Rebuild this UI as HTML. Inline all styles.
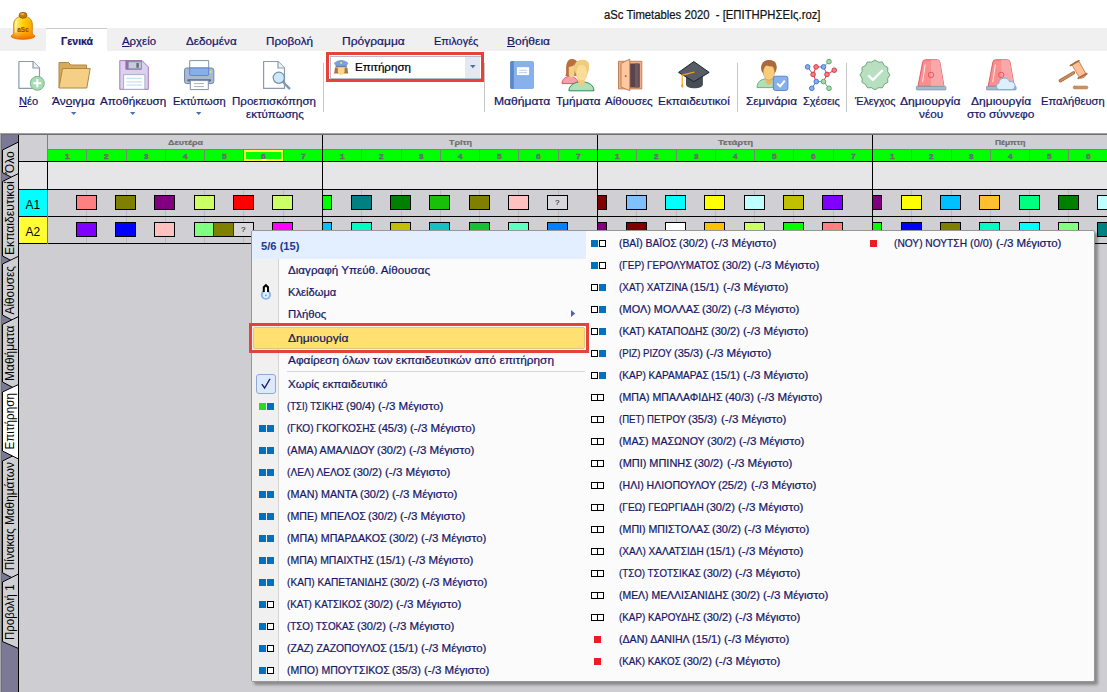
<!DOCTYPE html>
<html lang="el"><head><meta charset="utf-8"><title>aSc Timetables 2020 - [ΕΠΙΤΗΡΗΣΕΙς.roz]</title>
<style>
html,body{margin:0;padding:0;}
body{width:1107px;height:692px;overflow:hidden;position:relative;background:#fff;font-family:"Liberation Sans",sans-serif;font-size:12px;}
.a{position:absolute;}
.t{position:absolute;white-space:pre;line-height:1;transform-origin:0 0;-webkit-text-stroke:0.22px currentColor;}
.card{position:absolute;box-sizing:border-box;border:1px solid #000;width:21px;height:15px;}
.sq{position:absolute;width:7px;height:7px;box-sizing:border-box;}
.sqb{background:#0070c0;}
.sqg{background:#22dd22;}
.sqr{background:#ed1c24;}
.sqw{background:#fff;border:1px solid #000;}
.sep{position:absolute;width:1px;background:#c6c6c6;top:63px;height:49px;}
svg{position:absolute;overflow:visible;}
</style></head><body>

<span class="t" style="left:603.50px;top:8.84px;font-size:12px;color:#111;transform:scaleX(0.9415);">aSc Timetables 2020  - [ΕΠΙΤΗΡΗΣΕΙς.roz]</span>
<div class="a" style="left:0;top:28px;width:1107px;height:23px;background:#f0f0f0"></div>
<div class="a" style="left:46px;top:28px;width:61px;height:23px;background:#fff;border-top:1px solid #c9c9c9;box-sizing:border-box"></div>
<span class="t" style="left:61.00px;top:36.07px;font-size:11.5px;color:#151566;font-weight:bold;transform:scaleX(0.9127);">Γενικά</span>
<span class="t" style="left:122.00px;top:36.07px;font-size:11.5px;color:#151566;transform:scaleX(0.9904);"><u>Α</u>ρχείο</span>
<span class="t" style="left:186.30px;top:36.07px;font-size:11.5px;color:#151566;transform:scaleX(1.0188);">Δεδομένα</span>
<span class="t" style="left:266.00px;top:36.07px;font-size:11.5px;color:#151566;transform:scaleX(1.0176);">Προβολή</span>
<span class="t" style="left:342.40px;top:36.07px;font-size:11.5px;color:#151566;transform:scaleX(1.0450);">Πρόγραμμα</span>
<span class="t" style="left:434.30px;top:36.07px;font-size:11.5px;color:#151566;transform:scaleX(0.9514);">Επιλογές</span>
<span class="t" style="left:507.10px;top:36.07px;font-size:11.5px;color:#151566;transform:scaleX(1.0436);"><u>Β</u>οήθεια</span>
<span class="t" style="left:19.20px;top:96.07px;font-size:11.5px;color:#151566;transform:scaleX(0.9676);"><u>Ν</u>έο</span>
<span class="t" style="left:52.10px;top:96.07px;font-size:11.5px;color:#151566;transform:scaleX(1.0384);">Άν<u>ο</u>ιγμα</span>
<span class="t" style="left:100.30px;top:96.07px;font-size:11.5px;color:#151566;transform:scaleX(1.0154);">Αποθήκευση</span>
<span class="t" style="left:173.00px;top:96.07px;font-size:11.5px;color:#151566;transform:scaleX(0.9670);">Εκτύπωση</span>
<span class="t" style="left:231.50px;top:96.07px;font-size:11.5px;color:#151566;transform:scaleX(1.0045);">Προεπισκόπηση</span>
<span class="t" style="left:245.60px;top:109.07px;font-size:11.5px;color:#151566;transform:scaleX(1.0052);">εκτύπωσης</span>
<span class="t" style="left:493.70px;top:96.07px;font-size:11.5px;color:#151566;transform:scaleX(1.0539);">Μαθήματα</span>
<span class="t" style="left:555.50px;top:96.07px;font-size:11.5px;color:#151566;transform:scaleX(1.0226);">Τμήματα</span>
<span class="t" style="left:605.30px;top:96.07px;font-size:11.5px;color:#151566;transform:scaleX(1.0132);">Αίθουσες</span>
<span class="t" style="left:658.40px;top:96.07px;font-size:11.5px;color:#151566;transform:scaleX(1.0275);">Εκπαιδευτικοί</span>
<span class="t" style="left:746.10px;top:96.07px;font-size:11.5px;color:#151566;transform:scaleX(1.0290);">Σεμινάρια</span>
<span class="t" style="left:802.50px;top:96.07px;font-size:11.5px;color:#151566;transform:scaleX(0.9535);">Σχέσεις</span>
<span class="t" style="left:854.80px;top:96.07px;font-size:11.5px;color:#151566;transform:scaleX(0.9351);">Έλεγχος</span>
<span class="t" style="left:900.30px;top:96.07px;font-size:11.5px;color:#151566;transform:scaleX(1.0530);">Δημιουργία</span>
<span class="t" style="left:918.70px;top:109.07px;font-size:11.5px;color:#151566;transform:scaleX(1.0271);">νέου</span>
<span class="t" style="left:970.50px;top:96.07px;font-size:11.5px;color:#151566;transform:scaleX(1.0461);">Δημιουργία</span>
<span class="t" style="left:966.80px;top:109.07px;font-size:11.5px;color:#151566;transform:scaleX(1.0395);">στο σύννεφο</span>
<span class="t" style="left:1040.60px;top:96.07px;font-size:11.5px;color:#151566;transform:scaleX(0.9703);">Επαλήθευση</span>
<svg style="left:70.8px;top:112px" width="6" height="4"><path d="M0 0h5.4l-2.7 3.1z" fill="#4a6fb0"/></svg>
<svg style="left:130.3px;top:112px" width="6" height="4"><path d="M0 0h5.4l-2.7 3.1z" fill="#4a6fb0"/></svg>
<svg style="left:196.1px;top:112px" width="6" height="4"><path d="M0 0h5.4l-2.7 3.1z" fill="#4a6fb0"/></svg>
<div class="sep" style="left:323px"></div>
<div class="sep" style="left:484px"></div>
<div class="sep" style="left:737px"></div>
<div class="sep" style="left:846px"></div>
<div class="a" style="left:329.5px;top:55.5px;width:150px;height:21px;border:1px solid #b3bccb;background:#fff"></div>
<div class="a" style="left:465px;top:56.5px;width:15px;height:21px;background:#e3e8f3"></div>
<svg style="left:469.8px;top:65px" width="7" height="4"><path d="M0 0h5.6l-2.8 3.2z" fill="#4a6fb0"/></svg>
<span class="t" style="left:355.00px;top:61.67px;font-size:11.5px;color:#000;transform:scaleX(1.0084);">Επιτήρηση</span>
<div class="a" style="left:326px;top:52px;width:158px;height:30px;border:3px solid #e8403a;box-sizing:border-box"></div>
<svg style="left:0;top:0" width="1107" height="133" viewBox="0 0 1107 133">
<defs>
<linearGradient id="bellg" x1="0" y1="0" x2="1" y2="0"><stop offset="0" stop-color="#ffb000"/><stop offset="0.22" stop-color="#fff070"/><stop offset="0.5" stop-color="#ffd000"/><stop offset="1" stop-color="#f59a00"/></linearGradient>
<linearGradient id="bellv" x1="0" y1="0" x2="0" y2="1"><stop offset="0" stop-color="#ffff80" stop-opacity="0.3"/><stop offset="0.4" stop-color="#ff9000" stop-opacity="0"/><stop offset="0.8" stop-color="#ff7800" stop-opacity="0.6"/><stop offset="1" stop-color="#e85800" stop-opacity="0.85"/></linearGradient>
</defs>
<!-- bell logo -->
<g>
<path d="M11 36C12.5 35.2 13.6 34 13.8 32C13.6 28 13.2 23 14.5 20.5C16 17.5 19.5 16.3 23 16.3C26.5 16.3 30 17.5 31.5 20.5C32.8 23 32.4 28 32.2 32C32.4 34 33.5 35.2 35 36C35 37.8 29.5 39.3 23 39.3C16.5 39.3 11 37.8 11 36Z" fill="url(#bellg)" stroke="#c87800" stroke-width="0.8"/>
<path d="M11 36C12.5 35.2 13.6 34 13.8 32C13.6 28 13.2 23 14.5 20.5C16 17.5 19.5 16.3 23 16.3C26.5 16.3 30 17.5 31.5 20.5C32.8 23 32.4 28 32.2 32C32.4 34 33.5 35.2 35 36C35 37.8 29.5 39.3 23 39.3C16.5 39.3 11 37.8 11 36Z" fill="url(#bellv)"/>
<path d="M16.2 21.5C15.4 24 15.6 29 15.8 32" fill="none" stroke="#fffbd0" stroke-width="1.6" stroke-linecap="round" opacity="0.85"/>
<ellipse cx="23" cy="15.3" rx="4" ry="3" fill="#c07810" stroke="#8a5000" stroke-width="0.7"/>
<ellipse cx="22.3" cy="14.2" rx="2.2" ry="1.1" fill="#e8a840"/>
<text x="23" y="31.6" font-family="Liberation Sans, sans-serif" font-size="6.5" font-weight="bold" fill="#a04000" text-anchor="middle">aSc</text>
</g>
<!-- New -->
<g fill="#fff" stroke="#8a9bb0" stroke-width="1.2" stroke-linejoin="round">
<path d="M18.9 61.5H33l6.5 6.5V88.3H18.9Z"/>
<path d="M33 61.5V68h6.5" fill="#eef2f6"/>
</g>
<circle cx="37.3" cy="83.3" r="7" fill="#aadab4" stroke="#78b888" stroke-width="1"/>
<path d="M33.3 83.3h8M37.3 79.3v8" stroke="#fff" stroke-width="2"/>
<!-- Folder -->
<g stroke="#b08840" stroke-width="1" stroke-linejoin="round">
<path d="M59 88V62.5h9.5l2.5 2.5H86.5v3.5" fill="#d9a95c"/>
<path d="M59 88L62.5 68.5H90.2L86.8 88Z" fill="#f5cf85"/>
</g>
<!-- Floppy -->
<g stroke-linejoin="round">
<path d="M119.8 60.6H142l6.3 6.3V89.3H119.8Z" fill="#dcd0f0" stroke="#a878b8" stroke-width="1"/>
<path d="M125.4 60.6h16.4v8.2a1 1 0 0 1-1 1H126.4a1 1 0 0 1-1-1Z" fill="#8f6fa6"/>
<rect x="128.3" y="61.8" width="13" height="7" rx="0.8" fill="#c8ccd8" stroke="#8890a8" stroke-width="0.8"/>
<rect x="136.4" y="63" width="2.4" height="4.8" fill="#606878"/>
<rect x="123.6" y="74.6" width="21.3" height="14.7" fill="#fff" stroke="#a0a8c0" stroke-width="0.9"/>
<path d="M126.3 78.4h15.6M126.3 81.8h15.6M126.3 85.2h15.6" stroke="#c4e2f8" stroke-width="1.2"/>
</g>
<!-- Printer -->
<g stroke-linejoin="round">
<rect x="189.7" y="60.6" width="19" height="9" fill="#fff" stroke="#8090a8" stroke-width="1"/>
<rect x="184.5" y="68" width="29.3" height="15.6" rx="2.2" fill="#a9b9d1" stroke="#7088a8" stroke-width="1"/>
<path d="M189.7 68h19v6a1.5 1.5 0 0 1-1.5 1.5h-16a1.5 1.5 0 0 1-1.5-1.5Z" fill="#88b0e8" stroke="#5585cf" stroke-width="0.9"/>
<rect x="209.6" y="70.9" width="2" height="2" fill="#f8d860"/>
<path d="M188.3 80.3h21.8" stroke="#5a6a80" stroke-width="2.2" stroke-linecap="round"/>
<rect x="190.3" y="80.6" width="18" height="9" fill="#fff" stroke="#8090a8" stroke-width="1"/>
<path d="M194 83.6h10M194 86.6h10" stroke="#a8b0bc" stroke-width="1"/>
</g>
<!-- Preview -->
<g stroke-linejoin="round">
<path d="M263.6 61.5H278l6.5 6.5V88.4H263.6Z" fill="#fff" stroke="#8a9bb0" stroke-width="1.2"/>
<path d="M278 61.5V68h6.5" fill="#eef2f6" stroke="#8a9bb0" stroke-width="1.2"/>
<path d="M283 82l6.3 6.3" stroke="#8098b0" stroke-width="2.4" stroke-linecap="round"/>
<circle cx="278.8" cy="77.8" r="5.6" fill="#d0e8fa" stroke="#7090a8" stroke-width="1.2"/>
</g>
<!-- police (combo icon) -->
<g>
<path d="M335 67.5c-0.3 2.5-0.5 4.5-1 6h5.500000000000001V67.5ZM347.4 67.5c0.3 2.5 0.5 4.5 1 6H343V67.5Z" fill="#b07048"/>
<path d="M337.8 66.5h6.8v4.700000000000001c0 2.2-1.8 3.8-3.4 3.8s-3.4-1.6-3.4-3.8Z" fill="#f8d890"/>
<path d="M334 63.2c2-2.4 5-3.2 7.200000000000001-3.2s5.2 0.8 7.2 3.2l-1.6 2.3H335.6Z" fill="#78a0e0"/>
<rect x="335.6" y="65.3" width="11.2" height="1.9" fill="#6880a8"/>
<rect x="340.3" y="62" width="1.8" height="1.8" fill="#f8e060"/>
</g>
<!-- Book -->
<g>
<rect x="510.2" y="61" width="23.8" height="28" rx="1.8" fill="#88b0ec"/>
<path d="M512 61h1.8v28H512a1.8 1.8 0 0 1-1.8-1.8V62.8A1.8 1.8 0 0 1 512 61Z" fill="#5888c8"/>
<rect x="516.9" y="67.2" width="12.2" height="7.9" fill="#fff"/>
<path d="M519 70.3h8M519 72.6h8" stroke="#b8c8e0" stroke-width="0.9"/>
</g>
<!-- People -->
<g>
<path d="M562 83.6c0-4.3 3.5-7.2 8-7.2s8 2.9 8 7.2Z" fill="#f8a0a8" stroke="#e04858" stroke-width="0.9"/>
<path d="M565.2 75.9c1.600000000000001-2 0.6-6 1-10c0.6-4.500000000000001 2.8-7 5.800000000000001-7s6.500000000000001 2.5 6.500000000000001 7v10Z" fill="#b87040"/>
<path d="M568.8 67c2 0 4.500000000000001-1 5.700000000000001-2.8v10c0 2-1.5 3.5-3 3.5s-2.7-1.5-2.7-3.5Z" fill="#f4d088"/>
<path d="M568.9 90.8c0-5.500000000000001 5.500000000000001-9 12.6-9s12.5 3.5 12.5 9Z" fill="#b0e0b8" stroke="#208040" stroke-width="0.9"/>
<path d="M578.3 78h6.4v5c0 1.6-1.600000000000001 2.7-3.2 2.7s-3.2-1.1-3.2-2.7Z" fill="#f4cc80"/>
<ellipse cx="581.5" cy="68.5" rx="7.6" ry="7.6" fill="#f0cc80"/>
<ellipse cx="581.6" cy="72.6" rx="5.7" ry="8.2" fill="#fcdc98" stroke="#e8c070" stroke-width="0.5"/>
<path d="M575.2 70c0.5-3.5 1.5-5.500000000000001 3-6.500000000000001c2.5 1.5 6.5 2 9.5 1c0.3 1.5 0.5 3.5 0.5 5.500000000000001c1-2 1.5-6-0.5-8.5c-3-2.5-9-2-11.5 0.5c-1.5 2-2 5-1 8Z" fill="#f0cc80"/>
</g>
<!-- Door -->
<g stroke-linejoin="round">
<rect x="618.5" y="61.3" width="23.3" height="27.6" fill="#f0b080" stroke="#b87850" stroke-width="0.9"/>
<rect x="629.9" y="63.5" width="9.9" height="24" fill="#58444c"/>
<rect x="635" y="63.5" width="3.5" height="24" fill="#70585f"/>
<path d="M621 63.3L629.8 59.2V90.7L621 87Z" fill="#ffc8a0" stroke="#b87850" stroke-width="0.9"/>
<rect x="624.9" y="75.2" width="1.6" height="1.8" fill="#a06840"/>
</g>
<!-- Grad cap -->
<g stroke-linejoin="round">
<path d="M686 75v9.5c0 2.2 3.8 3.8 8.4 3.8s8.5-1.6 8.5-3.8V75Z" fill="#484c54"/>
<path d="M678.6 72.4L693.8 61.6L709.2 72.4L693.8 81.7Z" fill="#585c64" stroke="#18222e" stroke-width="1"/>
<path d="M694.5 72L682.2 75.2V85" fill="none" stroke="#f8a820" stroke-width="1.2"/>
<path d="M682.2 83.5l1.4 2.2l-1.4 2.6l-1.4-2.6Z" fill="#f8a820"/>
</g>
<!-- Seminar -->
<g>
<path d="M757 87.6c0-5.5 4-8.8 9.5-8.8h4c5.500000000000001 0 9.5 3.3 9.5 8.8Z" fill="#b0e0b8" stroke="#68a878" stroke-width="0.9"/>
<path d="M765.7 77h6.4v5c0 1.600000000000001-1.6 2.7-3.2 2.7s-3.2-1.1-3.2-2.7Z" fill="#e8b868"/>
<ellipse cx="768.8" cy="68" rx="7.8" ry="8" fill="#a86840"/>
<ellipse cx="768.9" cy="72.3" rx="5.6" ry="7.8" fill="#f8cc78" stroke="#c89850" stroke-width="0.5"/>
<path d="M762.7 70.5c0.5-3 1.3-4.500000000000001 2.8-5.500000000000001c2.500000000000001 1.5 6.500000000000001 2 9.5 0.8c0.3 1.5 0.5 3 0.5 4.7c1.2-2 1.5-6.000000000000001-0.5-8.5c-3-2.5-9.3-2-11.8 0.5c-1.5 2-1.7 5-0.5 8Z" fill="#a86840"/>
<rect x="773.3" y="76.2" width="14.6" height="14.3" rx="2.2" fill="#88b0ec" stroke="#5080c8" stroke-width="0.9"/>
<path d="M777.2 83.6l2.9 2.7l4.7-5.7" fill="none" stroke="#fff" stroke-width="2"/>
</g>
<!-- Molecule -->
<g stroke-width="1">
<path d="M807.6 66.9L813.1 74.4" stroke="#4878d0"/><path d="M816.1 66.9L813.1 74.4M813.1 74.4L816.3 81.6" stroke="#d83848"/>
<path d="M816.1 66.9H823.5M823.5 66.9L827 74.4M816.3 81.6L811.8 88.3" stroke="#4878d0"/>
<path d="M823.5 66.9L829 61.6M816.3 81.6H823.5M823.5 81.6L829 88.3" stroke="#58a870"/>
<path d="M827 74.4L834.2 70.2M827 74.4L823.5 81.6" stroke="#d83848"/>
<g fill="#88b0ec" stroke="#4878d0"><circle cx="807.6" cy="66.9" r="2.3"/><circle cx="823.5" cy="66.9" r="2.3"/><circle cx="816.3" cy="81.6" r="2.3"/><circle cx="811.8" cy="88.3" r="2.3"/></g>
<g fill="#f08088" stroke="#d83848"><circle cx="816.1" cy="66.9" r="2.3"/><circle cx="834.2" cy="70.2" r="2.3"/><circle cx="813.1" cy="74.4" r="2.3"/><circle cx="827" cy="74.4" r="2.3"/></g>
<g fill="#a8d8b0" stroke="#58a870"><circle cx="829" cy="61.6" r="2.3"/><circle cx="823.5" cy="81.6" r="2.3"/><circle cx="829" cy="88.3" r="2.3"/></g>
</g>
<!-- Check seal -->
<path d="M874.90 60.00Q878.03 63.21 882.35 62.00Q883.46 66.34 887.80 67.45Q886.59 71.77 889.80 74.90Q886.59 78.03 887.80 82.35Q883.46 83.46 882.35 87.80Q878.03 86.59 874.90 89.80Q871.77 86.59 867.45 87.80Q866.34 83.46 862.00 82.35Q863.21 78.03 860.00 74.90Q863.21 71.77 862.00 67.45Q866.34 66.34 867.45 62.00Q871.77 63.21 874.90 60.00Z" fill="#b8e0c0" stroke="#68a878" stroke-width="1" stroke-linejoin="round"/>
<path d="M868.3 75.4l4.600000000000001 4.500000000000001l9.9-9.9" fill="none" stroke="#fff" stroke-width="2.3"/>
<!-- Siren 1 -->
<g>
<path d="M918 86.3L922.6 62.3a2.8 2.8 0 0 1 2.8-2.500000000000001H937.1a2.8 2.8 0 0 1 2.8 2.5L944 86.3Z" fill="#f89090" stroke="#e05060" stroke-width="0.9"/>
<path d="M931 59.9h6.1a2.8 2.8 0 0 1 2.8 2.5L943.9 86.2H931Z" fill="#f8a8a8"/>
<path d="M925.2 64.5L922.6 82" stroke="#fff" stroke-width="0.9" opacity="0.9"/>
<circle cx="931" cy="74.9" r="2.7" fill="none" stroke="#e05060" stroke-width="0.9"/>
<rect x="916.3" y="86.4" width="29.6" height="3.5" rx="0.6" fill="#a8b8c8" stroke="#8098b0" stroke-width="0.8"/>
</g>
<g transform="translate(70.2,0)">
<path d="M918 86.3L922.6 62.3a2.8 2.8 0 0 1 2.8-2.500000000000001H937.1a2.8 2.8 0 0 1 2.8 2.5L944 86.3Z" fill="#f89090" stroke="#e05060" stroke-width="0.9"/>
<path d="M931 59.9h6.1a2.8 2.8 0 0 1 2.8 2.5L943.9 86.2H931Z" fill="#f8a8a8"/>
<path d="M925.2 64.5L922.6 82" stroke="#fff" stroke-width="0.9" opacity="0.9"/>
<circle cx="931" cy="74.9" r="2.7" fill="none" stroke="#e05060" stroke-width="0.9"/>
<rect x="916.3" y="86.4" width="29.6" height="3.5" rx="0.6" fill="#a8b8c8" stroke="#8098b0" stroke-width="0.8"/>
</g>
<!-- cloud -->
<path d="M999.6 89.6a3.2 3.2 0 0 1-0.8-6.3a5.6 5.6 0 0 1 10.8-1.6a4 4 0 0 1 2.6 7.9Z" fill="#ddeefc" stroke="#80a8e0" stroke-width="0.9" stroke-linejoin="round"/>
<!-- Gavel -->
<g stroke-linejoin="round" stroke-linecap="round">
<path d="M1060.3 80.7L1073.5 72.9" stroke="#a86c40" stroke-width="3.4"/>
<path d="M1060.3 80.7L1073.5 72.9" stroke="#c89060" stroke-width="1.8"/>
<path d="M1072.3 64.6C1074.5 62 1077.5 61 1079.2 61.8L1086.2 74.4C1085.8 76.5 1083 78.5 1080.2 78.2Z" fill="#ffc098" stroke="#b87850" stroke-width="0.9"/>
<path d="M1070.5 65.5L1078.8 60.7M1078.3 78.3L1086.7 73.6" stroke="#a86c40" stroke-width="1.8"/>
<rect x="1073.3" y="86.2" width="14.5" height="2.6" rx="1.2" fill="#c89060" stroke="#b07848" stroke-width="0.8"/>
</g>
</svg>

<div class="a" style="left:0;top:133px;width:1107px;height:559px;background:#cdcdd2"></div>
<div class="a" style="left:0;top:133px;width:1107px;height:1px;background:#a0a0a0"></div>
<div class="a" style="left:0;top:134px;width:1107px;height:1px;background:#6e6e6e"></div>
<div class="a" style="left:0;top:134px;width:1px;height:558px;background:#a8a8a8"></div>
<div class="a" style="left:1px;top:134px;width:1px;height:558px;background:#6e6e6e"></div>
<div class="a" style="left:2px;top:135px;width:16px;height:557px;background:#7a7a96"></div>
<div class="a" style="left:18px;top:135px;width:1px;height:557px;background:#000"></div>
<svg style="left:0;top:0" width="20" height="692" viewBox="0 0 20 692"><polygon points="18.5,142 2.5,150 2.5,172.6 18.5,181" fill="#d0d0d4"/><polyline points="18.5,142 2.5,150 2.5,172.6 18.5,181" fill="none" stroke="#000" stroke-width="1"/><polygon points="18.5,173.5 2.5,181.5 2.5,256 18.5,264.5" fill="#d0d0d4"/><polyline points="18.5,173.5 2.5,181.5 2.5,256 18.5,264.5" fill="none" stroke="#000" stroke-width="1"/><polygon points="18.5,256.3 2.5,264 2.5,315 18.5,323.5" fill="#d0d0d4"/><polyline points="18.5,256.3 2.5,264 2.5,315 18.5,323.5" fill="none" stroke="#000" stroke-width="1"/><polygon points="18.5,316.5 2.5,324.5 2.5,382 18.5,390.5" fill="#d0d0d4"/><polyline points="18.5,316.5 2.5,324.5 2.5,382 18.5,390.5" fill="none" stroke="#000" stroke-width="1"/><polygon points="18.5,453 2.5,461 2.5,572.8 18.5,581" fill="#d0d0d4"/><polyline points="18.5,453 2.5,461 2.5,572.8 18.5,581" fill="none" stroke="#000" stroke-width="1"/><polygon points="18.5,574 2.5,582 2.5,641.6 18.5,648.5" fill="#d0d0d4"/><polyline points="18.5,574 2.5,582 2.5,641.6 18.5,648.5" fill="none" stroke="#000" stroke-width="1"/><polygon points="18.5,384.5 2.5,392 2.5,451 18.5,459" fill="#ffffff"/><polyline points="18.5,384.5 2.5,392 2.5,451 18.5,459" fill="none" stroke="#000" stroke-width="1"/></svg>
<div class="a" style="left:18px;top:135px;width:1px;height:557px;background:#000"></div>
<span class="t" style="left:0;top:0;font-size:12px;color:#000;-webkit-text-stroke:0;transform:translate(3.64px,173.20px) rotate(-90deg) scaleX(1.0093);">Όλο</span>
<span class="t" style="left:0;top:0;font-size:12px;color:#000;-webkit-text-stroke:0;transform:translate(3.64px,255.00px) rotate(-90deg) scaleX(1.0107);">Εκπαιδευτικοί</span>
<span class="t" style="left:0;top:0;font-size:12px;color:#000;-webkit-text-stroke:0;transform:translate(3.64px,314.50px) rotate(-90deg) scaleX(0.9873);">Αίθουσες</span>
<span class="t" style="left:0;top:0;font-size:12px;color:#000;-webkit-text-stroke:0;transform:translate(3.64px,381.00px) rotate(-90deg) scaleX(0.9975);">Μαθήματα</span>
<span class="t" style="left:0;top:0;font-size:12px;color:#000;-webkit-text-stroke:0;transform:translate(3.64px,570.20px) rotate(-90deg) scaleX(0.9796);">Πίνακας Μαθημάτων</span>
<span class="t" style="left:0;top:0;font-size:12px;color:#000;-webkit-text-stroke:0;transform:translate(3.64px,640.00px) rotate(-90deg) scaleX(0.9536);">Προβολή 1</span>
<span class="t" style="left:0;top:0;font-size:12px;color:#000;-webkit-text-stroke:0;transform:translate(3.64px,449.50px) rotate(-90deg) scaleX(0.9749);">Επιτήρηση</span>
<div class="a" style="left:19px;top:135px;width:1088px;height:26px;background:#d0d0d4"></div>
<div class="a" style="left:47px;top:150px;width:1060px;height:11px;background:#00ff00"></div>
<div class="a" style="left:47px;top:149px;width:1060px;height:1px;background:#808080"></div>
<div class="a" style="left:19px;top:162px;width:1088px;height:27px;background:#e6e6e8"></div>
<div class="a" style="left:47px;top:190px;width:1060px;height:53px;background:#d0d0d4"></div>
<div class="a" style="left:19px;top:190px;width:28px;height:26px;background:#00ffff"></div>
<div class="a" style="left:19px;top:217px;width:28px;height:26px;background:#ffff33"></div>
<span class="t" style="left:25.60px;top:198.54px;font-size:12px;color:#000;-webkit-text-stroke:0;">A1</span>
<span class="t" style="left:25.60px;top:225.54px;font-size:12px;color:#000;-webkit-text-stroke:0;">A2</span>
<div class="a" style="left:86.0px;top:150px;width:1px;height:11px;background:#808080"></div>
<div class="a" style="left:86.0px;top:190px;width:1px;height:53px;background:#bcbcbf"></div>
<div class="a" style="left:126.0px;top:150px;width:1px;height:11px;background:#808080"></div>
<div class="a" style="left:126.0px;top:190px;width:1px;height:53px;background:#bcbcbf"></div>
<div class="a" style="left:165.0px;top:150px;width:1px;height:11px;background:#808080"></div>
<div class="a" style="left:165.0px;top:190px;width:1px;height:53px;background:#bcbcbf"></div>
<div class="a" style="left:204.0px;top:150px;width:1px;height:11px;background:#808080"></div>
<div class="a" style="left:204.0px;top:190px;width:1px;height:53px;background:#bcbcbf"></div>
<div class="a" style="left:243.0px;top:150px;width:1px;height:11px;background:#808080"></div>
<div class="a" style="left:243.0px;top:190px;width:1px;height:53px;background:#bcbcbf"></div>
<div class="a" style="left:283.0px;top:150px;width:1px;height:11px;background:#808080"></div>
<div class="a" style="left:283.0px;top:190px;width:1px;height:53px;background:#bcbcbf"></div>
<span class="t" style="left:65.04px;top:152.65px;font-size:7.5px;color:#6a6a74;font-weight:bold;transform:scaleX(1.1026);-webkit-text-stroke:0.45px #6a6a74;">1</span>
<span class="t" style="left:104.33px;top:152.65px;font-size:7.5px;color:#6a6a74;font-weight:bold;transform:scaleX(1.1026);-webkit-text-stroke:0.45px #6a6a74;">2</span>
<span class="t" style="left:143.61px;top:152.65px;font-size:7.5px;color:#6a6a74;font-weight:bold;transform:scaleX(1.1026);-webkit-text-stroke:0.45px #6a6a74;">3</span>
<span class="t" style="left:182.90px;top:152.65px;font-size:7.5px;color:#6a6a74;font-weight:bold;transform:scaleX(1.1026);-webkit-text-stroke:0.45px #6a6a74;">4</span>
<span class="t" style="left:222.19px;top:152.65px;font-size:7.5px;color:#6a6a74;font-weight:bold;transform:scaleX(1.1026);-webkit-text-stroke:0.45px #6a6a74;">5</span>
<span class="t" style="left:261.47px;top:152.65px;font-size:7.5px;color:#6a6a74;font-weight:bold;transform:scaleX(1.1026);-webkit-text-stroke:0.45px #6a6a74;">6</span>
<span class="t" style="left:300.76px;top:152.65px;font-size:7.5px;color:#6a6a74;font-weight:bold;transform:scaleX(1.1026);-webkit-text-stroke:0.45px #6a6a74;">7</span>
<div class="a" style="left:361.0px;top:150px;width:1px;height:11px;background:#808080"></div>
<div class="a" style="left:361.0px;top:190px;width:1px;height:53px;background:#bcbcbf"></div>
<div class="a" style="left:401.0px;top:150px;width:1px;height:11px;background:#808080"></div>
<div class="a" style="left:401.0px;top:190px;width:1px;height:53px;background:#bcbcbf"></div>
<div class="a" style="left:440.0px;top:150px;width:1px;height:11px;background:#808080"></div>
<div class="a" style="left:440.0px;top:190px;width:1px;height:53px;background:#bcbcbf"></div>
<div class="a" style="left:479.0px;top:150px;width:1px;height:11px;background:#808080"></div>
<div class="a" style="left:479.0px;top:190px;width:1px;height:53px;background:#bcbcbf"></div>
<div class="a" style="left:518.0px;top:150px;width:1px;height:11px;background:#808080"></div>
<div class="a" style="left:518.0px;top:190px;width:1px;height:53px;background:#bcbcbf"></div>
<div class="a" style="left:558.0px;top:150px;width:1px;height:11px;background:#808080"></div>
<div class="a" style="left:558.0px;top:190px;width:1px;height:53px;background:#bcbcbf"></div>
<span class="t" style="left:340.04px;top:152.65px;font-size:7.5px;color:#6a6a74;font-weight:bold;transform:scaleX(1.1026);-webkit-text-stroke:0.45px #6a6a74;">1</span>
<span class="t" style="left:379.33px;top:152.65px;font-size:7.5px;color:#6a6a74;font-weight:bold;transform:scaleX(1.1026);-webkit-text-stroke:0.45px #6a6a74;">2</span>
<span class="t" style="left:418.61px;top:152.65px;font-size:7.5px;color:#6a6a74;font-weight:bold;transform:scaleX(1.1026);-webkit-text-stroke:0.45px #6a6a74;">3</span>
<span class="t" style="left:457.90px;top:152.65px;font-size:7.5px;color:#6a6a74;font-weight:bold;transform:scaleX(1.1026);-webkit-text-stroke:0.45px #6a6a74;">4</span>
<span class="t" style="left:497.19px;top:152.65px;font-size:7.5px;color:#6a6a74;font-weight:bold;transform:scaleX(1.1026);-webkit-text-stroke:0.45px #6a6a74;">5</span>
<span class="t" style="left:536.47px;top:152.65px;font-size:7.5px;color:#6a6a74;font-weight:bold;transform:scaleX(1.1026);-webkit-text-stroke:0.45px #6a6a74;">6</span>
<span class="t" style="left:575.76px;top:152.65px;font-size:7.5px;color:#6a6a74;font-weight:bold;transform:scaleX(1.1026);-webkit-text-stroke:0.45px #6a6a74;">7</span>
<div class="a" style="left:636.0px;top:150px;width:1px;height:11px;background:#808080"></div>
<div class="a" style="left:636.0px;top:190px;width:1px;height:53px;background:#bcbcbf"></div>
<div class="a" style="left:676.0px;top:150px;width:1px;height:11px;background:#808080"></div>
<div class="a" style="left:676.0px;top:190px;width:1px;height:53px;background:#bcbcbf"></div>
<div class="a" style="left:715.0px;top:150px;width:1px;height:11px;background:#808080"></div>
<div class="a" style="left:715.0px;top:190px;width:1px;height:53px;background:#bcbcbf"></div>
<div class="a" style="left:754.0px;top:150px;width:1px;height:11px;background:#808080"></div>
<div class="a" style="left:754.0px;top:190px;width:1px;height:53px;background:#bcbcbf"></div>
<div class="a" style="left:793.0px;top:150px;width:1px;height:11px;background:#808080"></div>
<div class="a" style="left:793.0px;top:190px;width:1px;height:53px;background:#bcbcbf"></div>
<div class="a" style="left:833.0px;top:150px;width:1px;height:11px;background:#808080"></div>
<div class="a" style="left:833.0px;top:190px;width:1px;height:53px;background:#bcbcbf"></div>
<span class="t" style="left:615.04px;top:152.65px;font-size:7.5px;color:#6a6a74;font-weight:bold;transform:scaleX(1.1026);-webkit-text-stroke:0.45px #6a6a74;">1</span>
<span class="t" style="left:654.33px;top:152.65px;font-size:7.5px;color:#6a6a74;font-weight:bold;transform:scaleX(1.1026);-webkit-text-stroke:0.45px #6a6a74;">2</span>
<span class="t" style="left:693.61px;top:152.65px;font-size:7.5px;color:#6a6a74;font-weight:bold;transform:scaleX(1.1026);-webkit-text-stroke:0.45px #6a6a74;">3</span>
<span class="t" style="left:732.90px;top:152.65px;font-size:7.5px;color:#6a6a74;font-weight:bold;transform:scaleX(1.1026);-webkit-text-stroke:0.45px #6a6a74;">4</span>
<span class="t" style="left:772.19px;top:152.65px;font-size:7.5px;color:#6a6a74;font-weight:bold;transform:scaleX(1.1026);-webkit-text-stroke:0.45px #6a6a74;">5</span>
<span class="t" style="left:811.47px;top:152.65px;font-size:7.5px;color:#6a6a74;font-weight:bold;transform:scaleX(1.1026);-webkit-text-stroke:0.45px #6a6a74;">6</span>
<span class="t" style="left:850.76px;top:152.65px;font-size:7.5px;color:#6a6a74;font-weight:bold;transform:scaleX(1.1026);-webkit-text-stroke:0.45px #6a6a74;">7</span>
<div class="a" style="left:911.0px;top:150px;width:1px;height:11px;background:#808080"></div>
<div class="a" style="left:911.0px;top:190px;width:1px;height:53px;background:#bcbcbf"></div>
<div class="a" style="left:951.0px;top:150px;width:1px;height:11px;background:#808080"></div>
<div class="a" style="left:951.0px;top:190px;width:1px;height:53px;background:#bcbcbf"></div>
<div class="a" style="left:990.0px;top:150px;width:1px;height:11px;background:#808080"></div>
<div class="a" style="left:990.0px;top:190px;width:1px;height:53px;background:#bcbcbf"></div>
<div class="a" style="left:1029.0px;top:150px;width:1px;height:11px;background:#808080"></div>
<div class="a" style="left:1029.0px;top:190px;width:1px;height:53px;background:#bcbcbf"></div>
<div class="a" style="left:1068.0px;top:150px;width:1px;height:11px;background:#808080"></div>
<div class="a" style="left:1068.0px;top:190px;width:1px;height:53px;background:#bcbcbf"></div>
<span class="t" style="left:890.04px;top:152.65px;font-size:7.5px;color:#6a6a74;font-weight:bold;transform:scaleX(1.1026);-webkit-text-stroke:0.45px #6a6a74;">1</span>
<span class="t" style="left:929.33px;top:152.65px;font-size:7.5px;color:#6a6a74;font-weight:bold;transform:scaleX(1.1026);-webkit-text-stroke:0.45px #6a6a74;">2</span>
<span class="t" style="left:968.61px;top:152.65px;font-size:7.5px;color:#6a6a74;font-weight:bold;transform:scaleX(1.1026);-webkit-text-stroke:0.45px #6a6a74;">3</span>
<span class="t" style="left:1007.90px;top:152.65px;font-size:7.5px;color:#6a6a74;font-weight:bold;transform:scaleX(1.1026);-webkit-text-stroke:0.45px #6a6a74;">4</span>
<span class="t" style="left:1047.19px;top:152.65px;font-size:7.5px;color:#6a6a74;font-weight:bold;transform:scaleX(1.1026);-webkit-text-stroke:0.45px #6a6a74;">5</span>
<span class="t" style="left:1086.47px;top:152.65px;font-size:7.5px;color:#6a6a74;font-weight:bold;transform:scaleX(1.1026);-webkit-text-stroke:0.45px #6a6a74;">6</span>
<div class="a" style="left:19px;top:161px;width:1088px;height:1px;background:#000"></div>
<div class="a" style="left:19px;top:189px;width:1088px;height:1px;background:#000"></div>
<div class="a" style="left:19px;top:216px;width:1088px;height:1px;background:#000"></div>
<div class="a" style="left:19px;top:243px;width:1088px;height:1px;background:#000"></div>
<div class="a" style="left:47px;top:135px;width:1px;height:26px;background:#808080"></div>
<div class="a" style="left:47px;top:161px;width:1px;height:29px;background:#000"></div>
<div class="a" style="left:47px;top:190px;width:1px;height:54px;background:#777"></div>
<div class="a" style="left:321.6px;top:135px;width:1.5px;height:109px;background:#000"></div>
<div class="a" style="left:596.6px;top:135px;width:1.5px;height:109px;background:#000"></div>
<div class="a" style="left:871.6px;top:135px;width:1.5px;height:109px;background:#000"></div>
<span class="t" style="left:167.60px;top:138.53px;font-size:8px;color:#6e6e6e;font-weight:bold;transform:scaleX(1.1200);">Δευτέρα</span>
<span class="t" style="left:449.00px;top:138.53px;font-size:8px;color:#6e6e6e;font-weight:bold;transform:scaleX(1.1211);">Τρίτη</span>
<span class="t" style="left:717.80px;top:138.53px;font-size:8px;color:#6e6e6e;font-weight:bold;transform:scaleX(1.1846);">Τετάρτη</span>
<span class="t" style="left:994.60px;top:138.53px;font-size:8px;color:#6e6e6e;font-weight:bold;transform:scaleX(1.0563);">Πέμπτη</span>
<div class="a" style="left:243.5px;top:149.5px;width:39px;height:11.5px;border:2px solid #ffff33;box-sizing:border-box"></div>
<div class="card" style="left:76px;top:195px;background:#ff8080"></div>
<div class="card" style="left:115px;top:195px;background:#808000"></div>
<div class="card" style="left:154px;top:195px;background:#800080"></div>
<div class="card" style="left:194px;top:195px;background:#ccff66"></div>
<div class="card" style="left:233px;top:195px;background:#ff0000"></div>
<div class="card" style="left:272px;top:195px;background:#ccff66"></div>
<div class="card" style="left:323px;top:195px;width:9px;border-left:none;background:#00ff00"></div>
<div class="card" style="left:351px;top:195px;background:#008080"></div>
<div class="card" style="left:390px;top:195px;background:#008000"></div>
<div class="card" style="left:429px;top:195px;background:#18c008"></div>
<div class="card" style="left:469px;top:195px;background:#808000"></div>
<div class="card" style="left:508px;top:195px;background:#ffc0c0"></div>
<div class="card" style="left:547px;top:195px;background:#d8d8dc"></div>
<span class="t" style="left:555.30px;top:199.23px;font-size:8px;color:#000;transform:scaleX(1.0105);-webkit-text-stroke:0;">?</span>
<div class="card" style="left:598px;top:195px;width:9px;border-left:none;background:#800000"></div>
<div class="card" style="left:626px;top:195px;background:#80c0ff"></div>
<div class="card" style="left:665px;top:195px;background:#00ffff"></div>
<div class="card" style="left:704px;top:195px;background:#ffff00"></div>
<div class="card" style="left:744px;top:195px;background:#c0ffff"></div>
<div class="card" style="left:783px;top:195px;background:#c0c000"></div>
<div class="card" style="left:822px;top:195px;background:#8000ff"></div>
<div class="card" style="left:873px;top:195px;width:9px;border-left:none;background:#800080"></div>
<div class="card" style="left:901px;top:195px;background:#ffff00"></div>
<div class="card" style="left:940px;top:195px;background:#00c0ff"></div>
<div class="card" style="left:979px;top:195px;background:#ffc030"></div>
<div class="card" style="left:1019px;top:195px;background:#00ff80"></div>
<div class="card" style="left:1058px;top:195px;background:#008000"></div>
<div class="card" style="left:1097px;top:195px;background:#c0ffff"></div>
<div class="card" style="left:76px;top:222px;background:#8000ff"></div>
<div class="card" style="left:115px;top:222px;background:#0000ff"></div>
<div class="card" style="left:154px;top:222px;background:#ffc0c0"></div>
<div class="card" style="left:272px;top:222px;background:#ff00ff"></div>
<div class="card" style="left:323px;top:222px;width:9px;border-left:none;background:#00c0ff"></div>
<div class="card" style="left:351px;top:222px;background:#00ffc0"></div>
<div class="card" style="left:390px;top:222px;background:#c0c000"></div>
<div class="card" style="left:429px;top:222px;background:#18c0c0"></div>
<div class="card" style="left:469px;top:222px;background:#18c038"></div>
<div class="card" style="left:508px;top:222px;background:#60ffc0"></div>
<div class="card" style="left:547px;top:222px;background:#0080ff"></div>
<div class="card" style="left:598px;top:222px;width:9px;border-left:none;background:#800080"></div>
<div class="card" style="left:626px;top:222px;background:#800000"></div>
<div class="card" style="left:665px;top:222px;background:#ffffff"></div>
<div class="card" style="left:704px;top:222px;background:#ffc000"></div>
<div class="card" style="left:744px;top:222px;background:#ccff66"></div>
<div class="card" style="left:783px;top:222px;background:#00ff00"></div>
<div class="card" style="left:822px;top:222px;background:#ff8080"></div>
<div class="card" style="left:873px;top:222px;width:9px;border-left:none;background:#00ff00"></div>
<div class="card" style="left:901px;top:222px;background:#0000ff"></div>
<div class="card" style="left:940px;top:222px;background:#808000"></div>
<div class="card" style="left:979px;top:222px;background:#00ffc0"></div>
<div class="card" style="left:1019px;top:222px;background:#00ffff"></div>
<div class="card" style="left:1058px;top:222px;background:#80ff80"></div>
<div class="card" style="left:1097px;top:222px;background:#008080"></div>
<div class="card" style="left:194px;top:222px;width:60px;background:#d8d8dc"></div>
<div class="a" style="left:195px;top:223px;width:18.5px;height:13px;background:#80ff80"></div>
<div class="a" style="left:213.5px;top:223px;width:20px;height:13px;background:#808000"></div>
<div class="a" style="left:213px;top:223px;width:1px;height:13px;background:#333"></div>
<div class="a" style="left:233px;top:223px;width:1px;height:13px;background:#333"></div>
<span class="t" style="left:241.30px;top:226.23px;font-size:8px;color:#000;transform:scaleX(1.0105);-webkit-text-stroke:0;">?</span>
<div class="a" style="left:251px;top:230px;width:844px;height:452px;background:#fbfbfb;border:1px solid #979797;box-sizing:border-box;border-radius:2px;box-shadow:3px 3px 3px rgba(0,0,0,0.33)"></div>
<div class="a" style="left:252px;top:231px;width:26px;height:450px;background:#f0f0f0"></div>
<div class="a" style="left:278px;top:231px;width:1px;height:450px;background:#d4d4d4"></div>
<div class="a" style="left:252px;top:231px;width:333.5px;height:28px;background:#e3eefe"></div>
<span class="t" style="left:260.50px;top:240.59px;font-size:11px;color:#1c3a90;font-weight:bold;transform:scaleX(1.0152);-webkit-text-stroke:0;">5/6 (15)</span>
<span class="t" style="left:287.50px;top:265.07px;font-size:11.5px;color:#151566;transform:scaleX(1.0111);">Διαγραφή Υπεύθ. Αίθουσας</span>
<span class="t" style="left:287.50px;top:287.07px;font-size:11.5px;color:#151566;transform:scaleX(0.9705);">Κλείδωμα</span>
<span class="t" style="left:287.50px;top:309.07px;font-size:11.5px;color:#151566;transform:scaleX(0.9872);">Πλήθος</span>
<svg style="left:571px;top:310px" width="5" height="8"><path d="M0 0l4.2 3.5L0 7z" fill="#4a64b4"/></svg>
<div class="a" style="left:253px;top:327px;width:332px;height:22px;background:#ffe070;border:1px solid #e0c878;box-sizing:border-box;border-radius:2px"></div>
<span class="t" style="left:287.50px;top:332.87px;font-size:11.5px;color:#151566;transform:scaleX(1.0530);">Δημιουργία</span>
<div class="a" style="left:249px;top:323px;width:340px;height:30px;border:3px solid #e8403a;box-sizing:border-box"></div>
<span class="t" style="left:287.50px;top:354.87px;font-size:11.5px;color:#151566;transform:scaleX(1.0304);">Αφαίρεση όλων των εκπαιδευτικών από επιτήρηση</span>
<div class="a" style="left:287px;top:371px;width:298px;height:1px;background:#d7d7d7"></div>
<div class="a" style="left:256px;top:374px;width:20px;height:20px;box-sizing:border-box;background:#dce9fb;border:1px solid #90a8d8;border-radius:3px"></div>
<svg style="left:261px;top:378px" width="10" height="11"><path d="M0.8 6.2L3.6 10L9 0.8" fill="none" stroke="#1a1a6e" stroke-width="1.3"/></svg>
<span class="t" style="left:287.50px;top:378.77px;font-size:11.5px;color:#151566;transform:scaleX(1.0024);">Χωρίς εκπαιδευτικό</span>
<svg style="left:260px;top:283px" width="12" height="18" viewBox="0 0 12 18"><circle cx="5.9" cy="11.7" r="5.1" fill="#86b4f2"/><circle cx="5.9" cy="11.9" r="3.1" fill="#dcefff"/><circle cx="5.9" cy="12.4" r="0.9" fill="#8a98a8"/><path d="M3.8 9V4.2L5.9 2.2L8 4.2V9" fill="#fff" stroke="#000" stroke-width="2" stroke-linejoin="miter"/></svg>
<i class="sq sqg" style="left:259px;top:403px"></i><i class="sq sqb" style="left:267px;top:403px"></i>
<span class="t" style="left:286.50px;top:401.27px;font-size:11.5px;color:#151566;transform:scaleX(0.8291);">(ΤΣΙ) ΤΣΙΚΗΣ</span><span class="t" style="left:346.20px;top:401.27px;font-size:11.5px;color:#151566;transform:scaleX(0.9635);">(90/4)</span><span class="t" style="left:378.25px;top:401.27px;font-size:11.5px;color:#151566;transform:scaleX(1.0035);">(-/3 Μέγιστο)</span>
<i class="sq sqb" style="left:259px;top:425px"></i><i class="sq sqb" style="left:267px;top:425px"></i>
<span class="t" style="left:286.50px;top:423.27px;font-size:11.5px;color:#151566;transform:scaleX(0.8767);">(ΓΚΟ) ΓΚΟΓΚΟΣΗΣ</span><span class="t" style="left:378.20px;top:423.27px;font-size:11.5px;color:#151566;transform:scaleX(0.9635);">(45/3)</span><span class="t" style="left:410.25px;top:423.27px;font-size:11.5px;color:#151566;transform:scaleX(1.0035);">(-/3 Μέγιστο)</span>
<i class="sq sqb" style="left:259px;top:447px"></i><i class="sq sqb" style="left:267px;top:447px"></i>
<span class="t" style="left:286.50px;top:445.27px;font-size:11.5px;color:#151566;transform:scaleX(0.9268);">(ΑΜΑ) ΑΜΑΛΙΔΟΥ</span><span class="t" style="left:377.20px;top:445.27px;font-size:11.5px;color:#151566;transform:scaleX(0.9635);">(30/2)</span><span class="t" style="left:409.25px;top:445.27px;font-size:11.5px;color:#151566;transform:scaleX(1.0035);">(-/3 Μέγιστο)</span>
<i class="sq sqb" style="left:259px;top:469px"></i><i class="sq sqb" style="left:267px;top:469px"></i>
<span class="t" style="left:286.50px;top:467.27px;font-size:11.5px;color:#151566;transform:scaleX(0.8834);">(ΛΕΛ) ΛΕΛΟΣ</span><span class="t" style="left:353.20px;top:467.27px;font-size:11.5px;color:#151566;transform:scaleX(0.9635);">(30/2)</span><span class="t" style="left:385.25px;top:467.27px;font-size:11.5px;color:#151566;transform:scaleX(1.0035);">(-/3 Μέγιστο)</span>
<i class="sq sqb" style="left:259px;top:491px"></i><i class="sq sqb" style="left:267px;top:491px"></i>
<span class="t" style="left:286.50px;top:489.27px;font-size:11.5px;color:#151566;transform:scaleX(0.9326);">(ΜΑΝ) ΜΑΝΤΑ</span><span class="t" style="left:360.20px;top:489.27px;font-size:11.5px;color:#151566;transform:scaleX(0.9635);">(30/2)</span><span class="t" style="left:392.25px;top:489.27px;font-size:11.5px;color:#151566;transform:scaleX(1.0035);">(-/3 Μέγιστο)</span>
<i class="sq sqb" style="left:259px;top:513px"></i><i class="sq sqb" style="left:267px;top:513px"></i>
<span class="t" style="left:286.50px;top:511.27px;font-size:11.5px;color:#151566;transform:scaleX(0.9208);">(ΜΠΕ) ΜΠΕΛΟΣ</span><span class="t" style="left:368.20px;top:511.27px;font-size:11.5px;color:#151566;transform:scaleX(0.9635);">(30/2)</span><span class="t" style="left:400.25px;top:511.27px;font-size:11.5px;color:#151566;transform:scaleX(1.0035);">(-/3 Μέγιστο)</span>
<i class="sq sqb" style="left:259px;top:535px"></i><i class="sq sqb" style="left:267px;top:535px"></i>
<span class="t" style="left:286.50px;top:533.27px;font-size:11.5px;color:#151566;transform:scaleX(0.9273);">(ΜΠΑ) ΜΠΑΡΔΑΚΟΣ</span><span class="t" style="left:389.20px;top:533.27px;font-size:11.5px;color:#151566;transform:scaleX(0.9635);">(30/2)</span><span class="t" style="left:421.25px;top:533.27px;font-size:11.5px;color:#151566;transform:scaleX(1.0035);">(-/3 Μέγιστο)</span>
<i class="sq sqb" style="left:259px;top:557px"></i><i class="sq sqb" style="left:267px;top:557px"></i>
<span class="t" style="left:286.50px;top:555.27px;font-size:11.5px;color:#151566;transform:scaleX(0.9099);">(ΜΠΑ) ΜΠΑΙΧΤΗΣ</span><span class="t" style="left:376.20px;top:555.27px;font-size:11.5px;color:#151566;transform:scaleX(0.9635);">(15/1)</span><span class="t" style="left:408.25px;top:555.27px;font-size:11.5px;color:#151566;transform:scaleX(1.0035);">(-/3 Μέγιστο)</span>
<i class="sq sqb" style="left:259px;top:579px"></i><i class="sq sqb" style="left:267px;top:579px"></i>
<span class="t" style="left:286.50px;top:577.27px;font-size:11.5px;color:#151566;transform:scaleX(0.8813);">(ΚΑΠ) ΚΑΠΕΤΑΝΙΔΗΣ</span><span class="t" style="left:390.20px;top:577.27px;font-size:11.5px;color:#151566;transform:scaleX(0.9635);">(30/2)</span><span class="t" style="left:422.25px;top:577.27px;font-size:11.5px;color:#151566;transform:scaleX(1.0035);">(-/3 Μέγιστο)</span>
<i class="sq sqb" style="left:259px;top:601px"></i><i class="sq sqw" style="left:267px;top:601px"></i>
<span class="t" style="left:286.50px;top:599.27px;font-size:11.5px;color:#151566;transform:scaleX(0.8531);">(ΚΑΤ) ΚΑΤΣΙΚΟΣ</span><span class="t" style="left:364.20px;top:599.27px;font-size:11.5px;color:#151566;transform:scaleX(0.9635);">(30/2)</span><span class="t" style="left:396.25px;top:599.27px;font-size:11.5px;color:#151566;transform:scaleX(1.0035);">(-/3 Μέγιστο)</span>
<i class="sq sqb" style="left:259px;top:623px"></i><i class="sq sqw" style="left:267px;top:623px"></i>
<span class="t" style="left:286.50px;top:621.27px;font-size:11.5px;color:#151566;transform:scaleX(0.8541);">(ΤΣΟ) ΤΣΟΚΑΣ</span><span class="t" style="left:357.20px;top:621.27px;font-size:11.5px;color:#151566;transform:scaleX(0.9635);">(30/2)</span><span class="t" style="left:389.25px;top:621.27px;font-size:11.5px;color:#151566;transform:scaleX(1.0035);">(-/3 Μέγιστο)</span>
<i class="sq sqb" style="left:259px;top:645px"></i><i class="sq sqw" style="left:267px;top:645px"></i>
<span class="t" style="left:286.50px;top:643.27px;font-size:11.5px;color:#151566;transform:scaleX(0.9028);">(ΖΑΖ) ΖΑΖΟΠΟΥΛΟΣ</span><span class="t" style="left:389.20px;top:643.27px;font-size:11.5px;color:#151566;transform:scaleX(0.9635);">(15/1)</span><span class="t" style="left:421.25px;top:643.27px;font-size:11.5px;color:#151566;transform:scaleX(1.0035);">(-/3 Μέγιστο)</span>
<i class="sq sqb" style="left:259px;top:667px"></i><i class="sq sqw" style="left:267px;top:667px"></i>
<span class="t" style="left:286.50px;top:665.27px;font-size:11.5px;color:#151566;transform:scaleX(0.9128);">(ΜΠΟ) ΜΠΟΥΤΣΙΚΟΣ</span><span class="t" style="left:392.20px;top:665.27px;font-size:11.5px;color:#151566;transform:scaleX(0.9635);">(35/3)</span><span class="t" style="left:424.25px;top:665.27px;font-size:11.5px;color:#151566;transform:scaleX(1.0035);">(-/3 Μέγιστο)</span>
<i class="sq sqb" style="left:591px;top:240px"></i><i class="sq sqw" style="left:599px;top:240px"></i>
<span class="t" style="left:618.50px;top:238.27px;font-size:11.5px;color:#151566;transform:scaleX(0.9018);">(ΒΑΪ) ΒΑΪΟΣ</span><span class="t" style="left:679.20px;top:238.27px;font-size:11.5px;color:#151566;transform:scaleX(0.9635);">(30/2)</span><span class="t" style="left:711.25px;top:238.27px;font-size:11.5px;color:#151566;transform:scaleX(1.0035);">(-/3 Μέγιστο)</span>
<i class="sq sqb" style="left:591px;top:262px"></i><i class="sq sqw" style="left:599px;top:262px"></i>
<span class="t" style="left:618.50px;top:260.27px;font-size:11.5px;color:#151566;transform:scaleX(0.8628);">(ΓΕΡ) ΓΕΡΟΛΥΜΑΤΟΣ</span><span class="t" style="left:722.20px;top:260.27px;font-size:11.5px;color:#151566;transform:scaleX(0.9635);">(30/2)</span><span class="t" style="left:754.25px;top:260.27px;font-size:11.5px;color:#151566;transform:scaleX(1.0035);">(-/3 Μέγιστο)</span>
<i class="sq sqw" style="left:591px;top:284px"></i><i class="sq sqb" style="left:599px;top:284px"></i>
<span class="t" style="left:618.50px;top:282.27px;font-size:11.5px;color:#151566;transform:scaleX(0.8610);">(ΧΑΤ) ΧΑΤΖΙΝΑ</span><span class="t" style="left:690.45px;top:282.27px;font-size:11.5px;color:#151566;transform:scaleX(0.9635);">(15/1)</span><span class="t" style="left:722.50px;top:282.27px;font-size:11.5px;color:#151566;transform:scaleX(1.0035);">(-/3 Μέγιστο)</span>
<i class="sq sqw" style="left:591px;top:306px"></i><i class="sq sqb" style="left:599px;top:306px"></i>
<span class="t" style="left:618.50px;top:304.27px;font-size:11.5px;color:#151566;transform:scaleX(0.9459);">(ΜΟΛ) ΜΟΛΛΑΣ</span><span class="t" style="left:702.20px;top:304.27px;font-size:11.5px;color:#151566;transform:scaleX(0.9635);">(30/2)</span><span class="t" style="left:734.25px;top:304.27px;font-size:11.5px;color:#151566;transform:scaleX(1.0035);">(-/3 Μέγιστο)</span>
<i class="sq sqw" style="left:591px;top:328px"></i><i class="sq sqb" style="left:599px;top:328px"></i>
<span class="t" style="left:618.50px;top:326.27px;font-size:11.5px;color:#151566;transform:scaleX(0.8898);">(ΚΑΤ) ΚΑΤΑΠΟΔΗΣ</span><span class="t" style="left:711.20px;top:326.27px;font-size:11.5px;color:#151566;transform:scaleX(0.9635);">(30/2)</span><span class="t" style="left:743.25px;top:326.27px;font-size:11.5px;color:#151566;transform:scaleX(1.0035);">(-/3 Μέγιστο)</span>
<i class="sq sqw" style="left:591px;top:350px"></i><i class="sq sqb" style="left:599px;top:350px"></i>
<span class="t" style="left:618.50px;top:348.27px;font-size:11.5px;color:#151566;transform:scaleX(0.8380);">(ΡΙΖ) ΡΙΖΟΥ</span><span class="t" style="left:674.20px;top:348.27px;font-size:11.5px;color:#151566;transform:scaleX(0.9635);">(35/3)</span><span class="t" style="left:706.25px;top:348.27px;font-size:11.5px;color:#151566;transform:scaleX(1.0035);">(-/3 Μέγιστο)</span>
<i class="sq sqw" style="left:591px;top:372px"></i><i class="sq sqb" style="left:599px;top:372px"></i>
<span class="t" style="left:618.50px;top:370.27px;font-size:11.5px;color:#151566;transform:scaleX(0.8747);">(ΚΑΡ) ΚΑΡΑΜΑΡΑΣ</span><span class="t" style="left:711.20px;top:370.27px;font-size:11.5px;color:#151566;transform:scaleX(0.9635);">(15/1)</span><span class="t" style="left:743.25px;top:370.27px;font-size:11.5px;color:#151566;transform:scaleX(1.0035);">(-/3 Μέγιστο)</span>
<i class="sq sqw" style="left:591px;top:394px"></i><i class="sq sqw" style="left:597px;top:394px"></i>
<span class="t" style="left:618.50px;top:392.27px;font-size:11.5px;color:#151566;transform:scaleX(0.9199);">(ΜΠΑ) ΜΠΑΛΑΦΙΔΗΣ</span><span class="t" style="left:724.95px;top:392.27px;font-size:11.5px;color:#151566;transform:scaleX(0.9635);">(40/3)</span><span class="t" style="left:757.00px;top:392.27px;font-size:11.5px;color:#151566;transform:scaleX(1.0035);">(-/3 Μέγιστο)</span>
<i class="sq sqw" style="left:591px;top:416px"></i><i class="sq sqw" style="left:597px;top:416px"></i>
<span class="t" style="left:618.50px;top:414.27px;font-size:11.5px;color:#151566;transform:scaleX(0.8288);">(ΠΕΤ) ΠΕΤΡΟΥ</span><span class="t" style="left:688.45px;top:414.27px;font-size:11.5px;color:#151566;transform:scaleX(0.9635);">(35/3)</span><span class="t" style="left:720.50px;top:414.27px;font-size:11.5px;color:#151566;transform:scaleX(1.0035);">(-/3 Μέγιστο)</span>
<i class="sq sqw" style="left:591px;top:438px"></i><i class="sq sqw" style="left:597px;top:438px"></i>
<span class="t" style="left:618.50px;top:436.27px;font-size:11.5px;color:#151566;transform:scaleX(0.9243);">(ΜΑΣ) ΜΑΣΩΝΟΥ</span><span class="t" style="left:707.20px;top:436.27px;font-size:11.5px;color:#151566;transform:scaleX(0.9635);">(30/2)</span><span class="t" style="left:739.25px;top:436.27px;font-size:11.5px;color:#151566;transform:scaleX(1.0035);">(-/3 Μέγιστο)</span>
<i class="sq sqw" style="left:591px;top:460px"></i><i class="sq sqw" style="left:597px;top:460px"></i>
<span class="t" style="left:618.50px;top:458.27px;font-size:11.5px;color:#151566;transform:scaleX(0.9507);">(ΜΠΙ) ΜΠΙΝΗΣ</span><span class="t" style="left:694.45px;top:458.27px;font-size:11.5px;color:#151566;transform:scaleX(0.9635);">(30/2)</span><span class="t" style="left:726.50px;top:458.27px;font-size:11.5px;color:#151566;transform:scaleX(1.0035);">(-/3 Μέγιστο)</span>
<i class="sq sqw" style="left:591px;top:482px"></i><i class="sq sqw" style="left:597px;top:482px"></i>
<span class="t" style="left:618.50px;top:480.27px;font-size:11.5px;color:#151566;transform:scaleX(0.9185);">(ΗΛΙ) ΗΛΙΟΠΟΥΛΟΥ</span><span class="t" style="left:718.45px;top:480.27px;font-size:11.5px;color:#151566;transform:scaleX(0.9635);">(25/2)</span><span class="t" style="left:750.50px;top:480.27px;font-size:11.5px;color:#151566;transform:scaleX(1.0035);">(-/3 Μέγιστο)</span>
<i class="sq sqw" style="left:591px;top:504px"></i><i class="sq sqw" style="left:597px;top:504px"></i>
<span class="t" style="left:618.50px;top:502.27px;font-size:11.5px;color:#151566;transform:scaleX(0.8739);">(ΓΕΩ) ΓΕΩΡΓΙΑΔΗ</span><span class="t" style="left:706.20px;top:502.27px;font-size:11.5px;color:#151566;transform:scaleX(0.9635);">(30/2)</span><span class="t" style="left:738.25px;top:502.27px;font-size:11.5px;color:#151566;transform:scaleX(1.0035);">(-/3 Μέγιστο)</span>
<i class="sq sqw" style="left:591px;top:526px"></i><i class="sq sqw" style="left:597px;top:526px"></i>
<span class="t" style="left:618.50px;top:524.27px;font-size:11.5px;color:#151566;transform:scaleX(0.9242);">(ΜΠΙ) ΜΠΙΣΤΟΛΑΣ</span><span class="t" style="left:712.20px;top:524.27px;font-size:11.5px;color:#151566;transform:scaleX(0.9635);">(30/2)</span><span class="t" style="left:744.25px;top:524.27px;font-size:11.5px;color:#151566;transform:scaleX(1.0035);">(-/3 Μέγιστο)</span>
<i class="sq sqw" style="left:591px;top:548px"></i><i class="sq sqw" style="left:597px;top:548px"></i>
<span class="t" style="left:618.50px;top:546.27px;font-size:11.5px;color:#151566;transform:scaleX(0.8729);">(ΧΑΛ) ΧΑΛΑΤΣΙΔΗ</span><span class="t" style="left:706.20px;top:546.27px;font-size:11.5px;color:#151566;transform:scaleX(0.9635);">(15/1)</span><span class="t" style="left:738.25px;top:546.27px;font-size:11.5px;color:#151566;transform:scaleX(1.0035);">(-/3 Μέγιστο)</span>
<i class="sq sqw" style="left:591px;top:570px"></i><i class="sq sqw" style="left:597px;top:570px"></i>
<span class="t" style="left:618.50px;top:568.27px;font-size:11.5px;color:#151566;transform:scaleX(0.8458);">(ΤΣΟ) ΤΣΟΤΣΙΚΑΣ</span><span class="t" style="left:703.20px;top:568.27px;font-size:11.5px;color:#151566;transform:scaleX(0.9635);">(30/2)</span><span class="t" style="left:735.25px;top:568.27px;font-size:11.5px;color:#151566;transform:scaleX(1.0035);">(-/3 Μέγιστο)</span>
<i class="sq sqw" style="left:591px;top:592px"></i><i class="sq sqw" style="left:597px;top:592px"></i>
<span class="t" style="left:618.50px;top:590.27px;font-size:11.5px;color:#151566;transform:scaleX(0.9067);">(ΜΕΛ) ΜΕΛΛΙΣΑΝΙΔΗΣ</span><span class="t" style="left:731.20px;top:590.27px;font-size:11.5px;color:#151566;transform:scaleX(0.9635);">(30/2)</span><span class="t" style="left:763.25px;top:590.27px;font-size:11.5px;color:#151566;transform:scaleX(1.0035);">(-/3 Μέγιστο)</span>
<i class="sq sqw" style="left:591px;top:614px"></i><i class="sq sqw" style="left:597px;top:614px"></i>
<span class="t" style="left:618.50px;top:612.27px;font-size:11.5px;color:#151566;transform:scaleX(0.8566);">(ΚΑΡ) ΚΑΡΟΥΔΗΣ</span><span class="t" style="left:703.20px;top:612.27px;font-size:11.5px;color:#151566;transform:scaleX(0.9635);">(30/2)</span><span class="t" style="left:735.25px;top:612.27px;font-size:11.5px;color:#151566;transform:scaleX(1.0035);">(-/3 Μέγιστο)</span>
<i class="sq sqr" style="left:594px;top:636px"></i>
<span class="t" style="left:618.50px;top:634.27px;font-size:11.5px;color:#151566;transform:scaleX(0.9215);">(ΔΑΝ) ΔΑΝΙΗΛ</span><span class="t" style="left:692.20px;top:634.27px;font-size:11.5px;color:#151566;transform:scaleX(0.9635);">(15/1)</span><span class="t" style="left:724.25px;top:634.27px;font-size:11.5px;color:#151566;transform:scaleX(1.0035);">(-/3 Μέγιστο)</span>
<i class="sq sqr" style="left:594px;top:658px"></i>
<span class="t" style="left:618.50px;top:656.27px;font-size:11.5px;color:#151566;transform:scaleX(0.8501);">(ΚΑΚ) ΚΑΚΟΣ</span><span class="t" style="left:683.20px;top:656.27px;font-size:11.5px;color:#151566;transform:scaleX(0.9635);">(30/2)</span><span class="t" style="left:715.25px;top:656.27px;font-size:11.5px;color:#151566;transform:scaleX(1.0035);">(-/3 Μέγιστο)</span>
<i class="sq sqr" style="left:870px;top:240px"></i>
<span class="t" style="left:894.30px;top:238.27px;font-size:11.5px;color:#151566;transform:scaleX(0.8859);">(ΝΟΥ) ΝΟΥΤΣΗ</span><span class="t" style="left:970.30px;top:238.27px;font-size:11.5px;color:#151566;transform:scaleX(0.9511);">(0/0)</span><span class="t" style="left:995.90px;top:238.27px;font-size:11.5px;color:#151566;transform:scaleX(1.0035);">(-/3 Μέγιστο)</span>
</body></html>
